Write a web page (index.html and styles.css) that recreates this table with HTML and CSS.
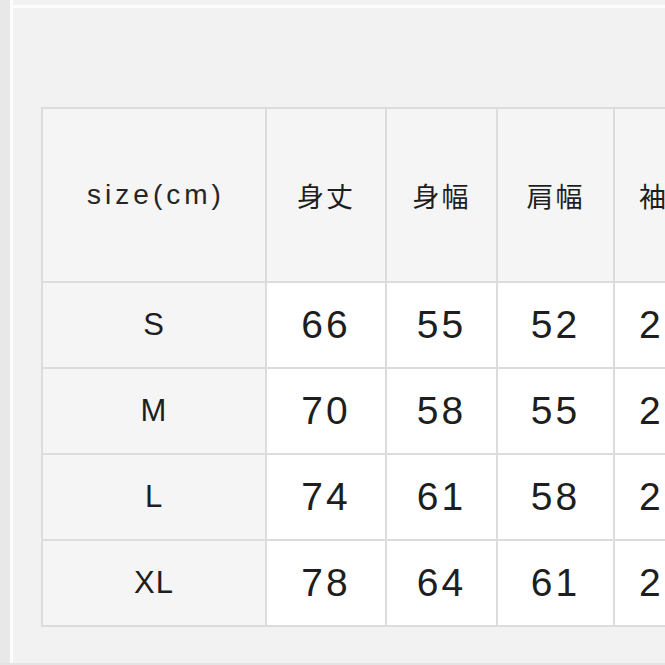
FILE: index.html
```html
<!DOCTYPE html>
<html lang="ja">
<head>
<meta charset="utf-8">
<title>size</title>
<link rel="stylesheet" href="styles.css">
</head>
<body>
<div class="frame">
  <div class="side"></div>
  <div class="vrule"></div>
  <div class="main">
    <div class="hrule"></div>
    <div class="chart">
      <div class="cell head first"><span class="lbl">size(cm)</span></div>
      <div class="cell head"><span class="jp">身丈</span></div>
      <div class="cell head"><span class="jp">身幅</span></div>
      <div class="cell head"><span class="jp">肩幅</span></div>
      <div class="cell head cut"><span class="jp">袖</span></div>

      <div class="cell first"><span class="sz">S</span></div>
      <div class="cell"><span class="num">66</span></div>
      <div class="cell"><span class="num">55</span></div>
      <div class="cell"><span class="num">52</span></div>
      <div class="cell cut"><span class="num">2</span></div>

      <div class="cell first"><span class="sz">M</span></div>
      <div class="cell"><span class="num">70</span></div>
      <div class="cell"><span class="num">58</span></div>
      <div class="cell"><span class="num">55</span></div>
      <div class="cell cut"><span class="num">2</span></div>

      <div class="cell first"><span class="sz">L</span></div>
      <div class="cell"><span class="num">74</span></div>
      <div class="cell"><span class="num">61</span></div>
      <div class="cell"><span class="num">58</span></div>
      <div class="cell cut"><span class="num">2</span></div>

      <div class="cell first"><span class="sz">XL</span></div>
      <div class="cell"><span class="num">78</span></div>
      <div class="cell"><span class="num">64</span></div>
      <div class="cell"><span class="num">61</span></div>
      <div class="cell cut"><span class="num">2</span></div>
    </div>
  </div>
</div>
</body>
</html>
```

FILE: styles.css
```css
html, body {
  margin: 0;
  padding: 0;
}
body {
  width: 665px;
  height: 665px;
  overflow: hidden;
  background: #f2f2f2;
  font-family: "Liberation Sans", "Noto Sans CJK JP", sans-serif;
  color: #1e1e1e;
}
.frame {
  display: flex;
  height: 663px;
  border-bottom: 2px solid #e4e4e4;
}
.side {
  width: 10px;
  flex: none;
  background: #e8e8e8;
}
.vrule {
  width: 3px;
  flex: none;
  background: #fdfdfd;
}
.main {
  flex: 1;
  padding-top: 5px;
  min-width: 0;
  overflow: hidden;
}
.hrule {
  height: 3px;
  background: #fdfdfd;
}
.chart {
  margin-top: 99px;
  margin-left: 28px;
  display: grid;
  grid-template-columns: 222px 118px 109px 115px 118px;
  grid-template-rows: 172px 84px 84px 84px 84px;
  gap: 2px;
  padding: 2px;
  background: #dcdcdc;
  width: max-content;
}
.cell {
  background: #ffffff;
  display: flex;
  align-items: center;
  justify-content: center;
}
.cell.head,
.cell.first {
  background: #f5f5f5;
}
.cut {
  justify-content: flex-start;
  padding-left: 24px;
}
.lbl {
  font-size: 28px;
  letter-spacing: 4px;
  margin-right: -4px;
  color: #252525;
}
.jp {
  font-family: "Noto Sans CJK JP", sans-serif;
  font-size: 27px;
  letter-spacing: 2px;
}
.sz {
  font-size: 31px;
  letter-spacing: 1px;
}
.num {
  font-size: 39px;
  letter-spacing: 3px;
}
```
